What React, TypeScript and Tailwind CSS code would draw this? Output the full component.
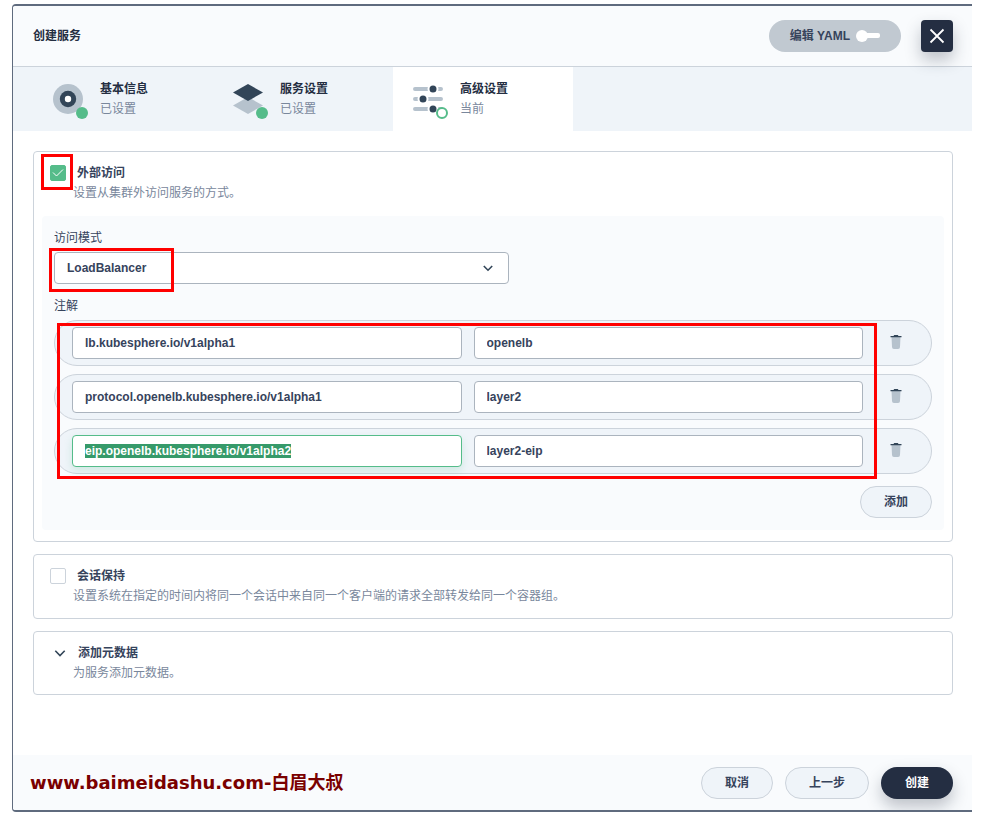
import { useEffect, useRef, type ReactNode } from "react";

type Annotation = {
  key: string;
  value: string;
};

const annotations: Annotation[] = [
  { key: "lb.kubesphere.io/v1alpha1", value: "openelb" },
  { key: "protocol.openelb.kubesphere.io/v1alpha1", value: "layer2" },
  { key: "eip.openelb.kubesphere.io/v1alpha2", value: "layer2-eip" },
];

function BasicIcon() {
  return (
    <svg width="30" height="30" viewBox="0 0 30 30">
      <circle cx="15" cy="15" r="15" fill="#b6c2cd" />
      <circle cx="15" cy="15" r="8.2" fill="#324558" />
      <circle cx="15" cy="15" r="3.2" fill="#fff" />
    </svg>
  );
}

function LayersIcon() {
  return (
    <svg width="30" height="30" viewBox="0 0 30 30">
      <path d="M0 21.5 15 13l15 8.500L15 30z" fill="#b6c2cd" />
      <path d="M0 8.500 15 0l15 8.500L15 17z" fill="#324558" />
    </svg>
  );
}

function SlidersIcon() {
  return (
    <svg width="30" height="30" viewBox="0 0 30 30">
      <g stroke="#b6c2cd" strokeWidth="4" strokeLinecap="round">
        <path d="M2 5h26M2 15h26M2 25h26" />
      </g>
      <g fill="#324558" stroke="#fff" strokeWidth="2">
        <circle cx="20" cy="5" r="4.500" />
        <circle cx="10" cy="15" r="4.500" />
        <circle cx="20" cy="25" r="4.500" />
      </g>
    </svg>
  );
}

function ChevronIcon({ className = "" }: { className?: string }) {
  return (
    <svg
      width="20"
      height="20"
      viewBox="0 0 20 20"
      fill="none"
      stroke="#324558"
      strokeWidth="1.600"
      className={className}
    >
      <path d="M5.300 7.800 10 12.500 14.700 7.800" />
    </svg>
  );
}

function SmallChevronIcon({ className = "" }: { className?: string }) {
  return (
    <svg
      width="20"
      height="20"
      viewBox="0 0 20 20"
      fill="none"
      stroke="#324558"
      strokeWidth="1.600"
      className={className}
    >
      <path d="M5.800 8 10 12.200 14.200 8" />
    </svg>
  );
}

function TrashIcon() {
  return (
    <svg width="20" height="20" viewBox="0 0 20 20">
      <path d="M5.500 4.500h9l-.5 10.500a2 2 0 0 1-2 2H8a2 2 0 0 1-2-2z" fill="#b6c2cd" />
      <path d="M4.500 4h3l.7-1h3.600l.7 1h3v1.200h-11z" fill="#324558" />
    </svg>
  );
}

type StepProps = {
  icon: ReactNode;
  title: string;
  status: string;
  current?: boolean;
};

function Step({ icon, title, status, current }: StepProps) {
  return (
    <button
      type="button"
      className={`flex w-[180px] items-center gap-[17px] px-5 py-3 text-left ${
        current ? "bg-white" : ""
      }`}
    >
      <span className="relative">
        {icon}
        <span
          className={`absolute -right-[5px] -bottom-[5px] size-3 rounded-full ${
            current ? "border-2 border-[#55bc8a] bg-white" : "bg-[#55bc8a]"
          }`}
        />
      </span>
      <span>
        <span className="block font-bold text-[#242e42]">{title}</span>
        <span className="block text-[#79879c]">{status}</span>
      </span>
    </button>
  );
}

const inputClass =
  "h-8 min-w-0 flex-1 rounded-sm border bg-white px-3 font-bold text-[#36435c] outline-none selection:bg-[#369a6a] selection:text-white";

function App() {
  const selectedRef = useRef<HTMLInputElement>(null);

  useEffect(() => {
    selectedRef.current?.focus();
    selectedRef.current?.select();
  }, []);

  return (
    <div className="bg-white pt-1 pr-4 pb-1 pl-3 font-['Liberation_Sans','Noto_Sans_CJK_SC',sans-serif] text-xs leading-5 text-[#36435c]">
      <div className="overflow-hidden rounded-l-sm border-y-2 border-l border-[#5f6b7e] bg-white">
        <header className="flex items-center border-b border-[#ccd3db] bg-[#f9fbfd] py-3.5 pr-[19px] pl-5">
          <h1 className="flex-1 font-bold text-[#242e42]">创建服务</h1>
          <button
            type="button"
            role="switch"
            aria-checked="false"
            className="mr-5 flex h-8 items-center gap-1.5 rounded-full bg-[#c1c9d1] px-[21px] font-bold"
          >
            编辑 YAML
            <svg width="24" height="12" viewBox="0 0 24 12" fill="#fff">
              <rect x="6" y="3" width="18" height="5" rx="2" />
              <circle cx="6" cy="6" r="6" />
            </svg>
          </button>
          <button
            type="button"
            aria-label="关闭"
            className="flex size-8 items-center justify-center rounded-sm bg-[#242e42] shadow-[0_8px_16px_rgba(36,46,66,0.28)]"
          >
            <svg width="16" height="16" viewBox="0 0 16 16" stroke="#fff" strokeWidth="1.800">
              <path d="M1.500 1.500l13 13M14.500 1.500l-13 13" />
            </svg>
          </button>
        </header>

        <nav className="flex bg-[#eff4f9] pl-5">
          <Step icon={<BasicIcon />} title="基本信息" status="已设置" />
          <Step icon={<LayersIcon />} title="服务设置" status="已设置" />
          <Step icon={<SlidersIcon />} title="高级设置" status="当前" current />
        </nav>

        <main className="flex flex-col gap-3 pt-5 pr-[19px] pb-[60px] pl-5">
          <section className="rounded-sm border border-[#ccd3db] py-[11px]">
            <div className="flex items-center pl-4">
              <span className="relative flex">
                <input
                  id="external"
                  type="checkbox"
                  defaultChecked
                  className="size-4 appearance-none rounded-xs border border-[#ccd3db] checked:border-[#55bc8a] checked:bg-[#55bc8a]"
                />
                <svg
                  width="16"
                  height="16"
                  viewBox="0 0 16 16"
                  fill="none"
                  stroke="#fff"
                  className="pointer-events-none absolute inset-0"
                >
                  <path d="M3 7.500 6.500 11 13 4.500" />
                </svg>
                <span className="pointer-events-none absolute -top-[11px] -right-[7px] -bottom-[9px] -left-[9px] border-3 border-[#ff0000]" />
              </span>
              <label htmlFor="external" className="pl-[11px] font-bold">
                外部访问
              </label>
            </div>
            <p className="pl-[39px] text-[#79879c]">设置从集群外访问服务的方式。</p>

            <div className="mx-2 mt-[13px] rounded-sm bg-[#f9fbfd] p-3">
              <label htmlFor="mode">访问模式</label>
              <div className="relative mt-1 w-[455px] max-w-full">
                <select
                  id="mode"
                  className="block h-8 w-full appearance-none rounded-sm border border-[#abb4be] bg-white px-3 font-bold"
                >
                  <option>LoadBalancer</option>
                </select>
                <SmallChevronIcon className="pointer-events-none absolute top-1.5 right-[11px]" />
                <span className="pointer-events-none absolute -top-1 -bottom-2 -left-[5px] w-[125px] border-3 border-[#ff0000]" />
              </div>

              <p className="mt-3">注解</p>
              <div className="relative mt-1 flex flex-col gap-2">
                {annotations.map((item, i) => (
                  <div
                    key={item.key}
                    className="flex items-center rounded-full border border-[#ccd3db] bg-[#eff4f9] py-1.5 pr-[25px] pl-[17px]"
                  >
                    <div className="flex min-w-0 flex-1 gap-3">
                      <input
                        ref={i === 2 ? selectedRef : undefined}
                        aria-label="键"
                        defaultValue={item.key}
                        className={`${inputClass} ${
                          i === 2
                            ? "border-[#55bc8a] shadow-[0_4px_8px_rgba(85,188,138,0.2)]"
                            : "border-[#abb4be]"
                        }`}
                      />
                      <input
                        aria-label="值"
                        defaultValue={item.value}
                        className={`${inputClass} border-[#abb4be]`}
                      />
                    </div>
                    <button type="button" aria-label="删除" className="ml-[23px] pb-0.5">
                      <TrashIcon />
                    </button>
                  </div>
                ))}
                <span className="pointer-events-none absolute top-[3px] right-[55px] -bottom-[5px] left-[3px] border-3 border-[#ff0000]" />
              </div>
              <div className="mt-3 flex justify-end">
                <button
                  type="button"
                  className="h-8 w-[72px] rounded-full border border-[#ccd3db] bg-[#eff4f9] font-bold"
                >
                  添加
                </button>
              </div>
            </div>
          </section>

          <section className="rounded-sm border border-[#ccd3db] pt-[11px] pb-3">
            <div className="flex items-center pl-4">
              <input
                id="session"
                type="checkbox"
                className="size-4 appearance-none rounded-xs border border-[#ccd3db] bg-white checked:bg-[#55bc8a]"
              />
              <label htmlFor="session" className="pl-[11px] font-bold">
                会话保持
              </label>
            </div>
            <p className="pl-[39px] text-[#79879c]">
              设置系统在指定的时间内将同一个会话中来自同一个客户端的请求全部转发给同一个容器组。
            </p>
          </section>

          <section className="rounded-sm border border-[#ccd3db] py-[11px]">
            <button type="button" className="flex items-center gap-2 pl-4 font-bold">
              <ChevronIcon />
              添加元数据
            </button>
            <p className="pl-[39px] text-[#79879c]">为服务添加元数据。</p>
          </section>
        </main>

        <footer className="flex items-center gap-3 bg-[#f9fbfd] pt-3 pr-[19px] pb-[11px] pl-[17px] font-bold">
          <p className="flex-1 font-['DejaVu_Sans','Noto_Sans_CJK_SC',sans-serif] text-lg whitespace-nowrap text-[#7a0000]">
            www.baimeidashu.com-白眉大叔
          </p>
          <button
            type="button"
            className="h-8 w-[72px] rounded-full border border-[#ccd3db] bg-[#eff4f9]"
          >
            取消
          </button>
          <button
            type="button"
            className="h-8 w-[84px] rounded-full border border-[#ccd3db] bg-[#eff4f9]"
          >
            上一步
          </button>
          <button
            type="button"
            className="h-8 w-[72px] rounded-full bg-[#242e42] text-white shadow-[0_8px_16px_rgba(36,46,66,0.28)]"
          >
            创建
          </button>
        </footer>
      </div>
    </div>
  );
}

export default App;
